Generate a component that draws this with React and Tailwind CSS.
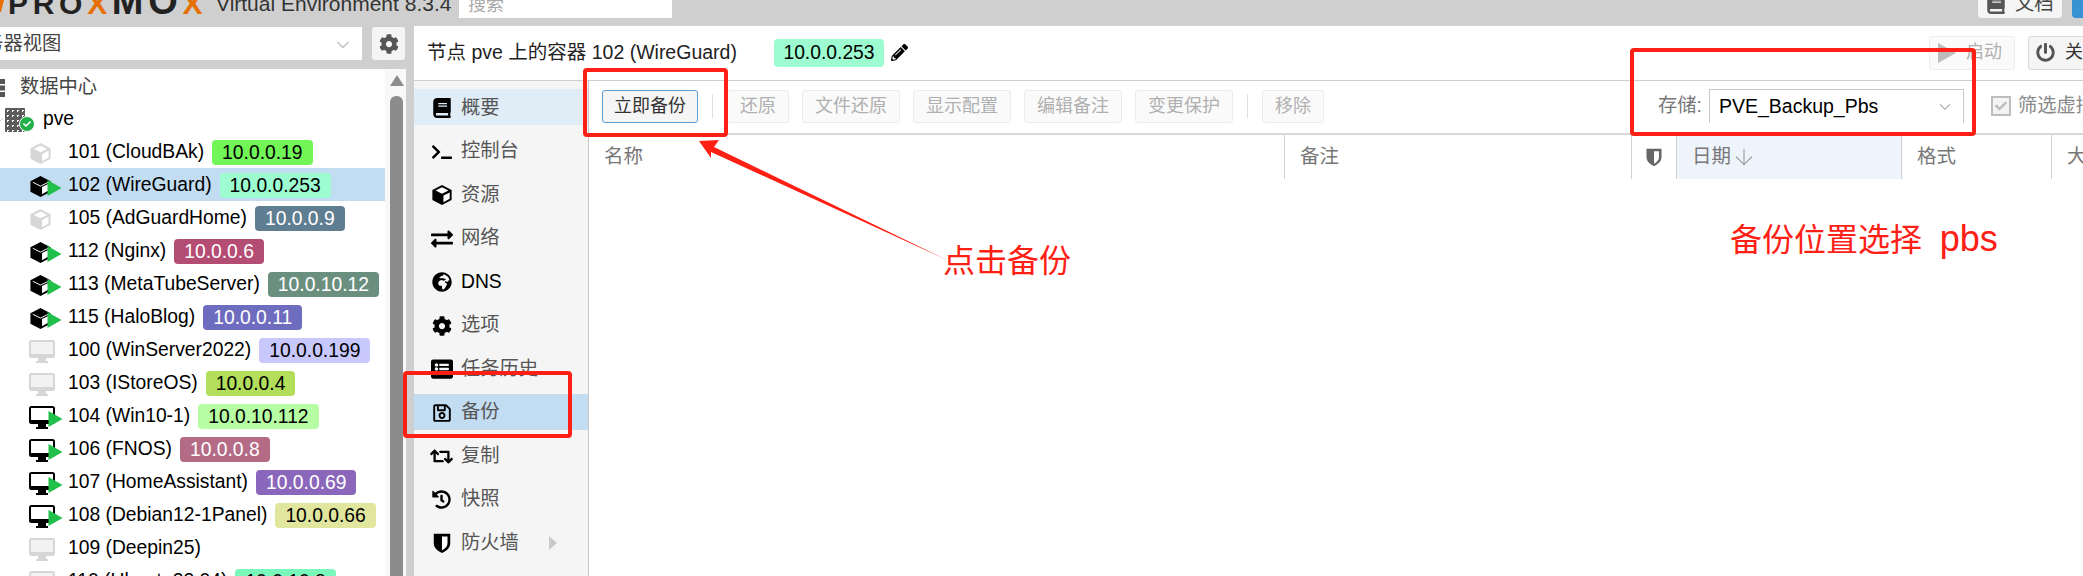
import React from 'react';
import { ChevronDown, ArrowDown } from 'lucide-react';
import {
    FaBook, FaTerminal, FaExchangeAlt, FaGlobeAfrica, FaCog, FaListAlt, FaRegSave,
    FaRetweet, FaHistory, FaPowerOff, FaPencilAlt, FaCheck,
} from 'react-icons/fa';

const guests = [
    { label: '101 (CloudBAk)', ip: '10.0.0.19', tag: 'bg-[#72f557] text-black', kind: 'ct', on: false },
    { label: '102 (WireGuard)', ip: '10.0.0.253', tag: 'bg-[#9dfdd0] text-black', kind: 'ct', on: true, selected: true },
    { label: '105 (AdGuardHome)', ip: '10.0.0.9', tag: 'bg-[#5f7e92] text-white', kind: 'ct', on: false },
    { label: '112 (Nginx)', ip: '10.0.0.6', tag: 'bg-[#b44d73] text-white', kind: 'ct', on: true },
    { label: '113 (MetaTubeServer)', ip: '10.0.10.12', tag: 'bg-[#6b8f7f] text-white', kind: 'ct', on: true },
    { label: '115 (HaloBlog)', ip: '10.0.0.11', tag: 'bg-[#6e6cbe] text-white', kind: 'ct', on: true },
    { label: '100 (WinServer2022)', ip: '10.0.0.199', tag: 'bg-[#c8c8fc] text-black', kind: 'vm', on: false },
    { label: '103 (IStoreOS)', ip: '10.0.0.4', tag: 'bg-[#b2de5b] text-black', kind: 'vm', on: false },
    { label: '104 (Win10-1)', ip: '10.0.10.112', tag: 'bg-[#b6fda3] text-black', kind: 'vm', on: true },
    { label: '106 (FNOS)', ip: '10.0.0.8', tag: 'bg-[#b46b85] text-white', kind: 'vm', on: true },
    { label: '107 (HomeAssistant)', ip: '10.0.0.69', tag: 'bg-[#8a67ba] text-white', kind: 'vm', on: true },
    { label: '108 (Debian12-1Panel)', ip: '10.0.0.66', tag: 'bg-[#e0e69e] text-black', kind: 'vm', on: true },
    { label: '109 (Deepin25)', kind: 'vm', on: false },
    { label: '110 (Ubuntu22.04)', ip: '10.0.10.8', tag: 'bg-[#7af7ba] text-black', kind: 'vm', on: false },
];

// lid = white top face; without it the top is only hinted by a thin line
const CubeIcon = ({ className, lid }) => (
    <svg viewBox="0 0 24 24" className={className}>
        <path d="M12 1 22.500 6.500V17.500L12 23 1.500 17.500V6.500Z" fill="currentColor" />
        {lid
            ? <path d="M12 3.600 19 7.200 12 10.600 5 7.200Z" fill="#fff" />
            : <path d="M4 7.600 12 11.600 20 7.600" fill="none" stroke="#fff" strokeWidth="1" />}
        <path d="M13.600 12.600 20.400 9.200V16.200L13.600 20Z" fill="#fff" />
    </svg>
);

const ShieldIcon = ({ className }) => (
    <svg viewBox="0 0 24 24" className={className}>
        <path d="M3 2H21V12C21 18 16 21 12 23 8 21 3 18 3 12Z" fill="currentColor" />
        <path d="M12 5H18V12C18 16 15 18.500 12 20Z" fill="#fff" />
    </svg>
);

const MonitorIcon = ({ on }) => (
    <svg viewBox="0 0 26 23" className={`w-[26px] h-[23px] ${on ? 'text-black' : 'text-[#d6d6d6]'}`}>
        <path d="M2.500 0H23.500A2.500 2.500 0 0 1 26 2.500V15.500A2.500 2.500 0 0 1 23.500 18H2.500A2.500 2.500 0 0 1 0 15.500V2.500A2.500 2.500 0 0 1 2.500 0Z" fill="currentColor" />
        <rect x="2" y="2" width="22" height="12" fill={on ? '#fff' : '#f2f2f2'} />
        <rect x="9" y="18" width="8" height="3" fill="currentColor" />
        <rect x="7" y="21" width="12" height="2" fill="currentColor" />
    </svg>
);

const GuestRow = ({ guest }) => (
    <div className={`flex items-center h-[33px] pl-[29px] pt-[2px] shrink-0 ${guest.selected ? 'bg-[#c2dcf2]' : ''}`}>
        <span className="relative w-[39px] h-[23px] mt-[2px] shrink-0">
            {guest.kind === 'ct'
                ? <CubeIcon className={`w-[23px] h-[23px] ${guest.on ? 'text-black' : 'text-[#d6d6d6]'}`} lid={!guest.on} />
                : <MonitorIcon on={guest.on} />}
            {guest.on && (
                <svg viewBox="0 0 14 16" className={`absolute top-[5px] w-[15px] h-[16px] ${guest.kind === 'ct' ? 'left-[18px]' : 'left-[19px]'}`}>
                    <path d="M0 0 14 8 0 16Z" fill="#21c04a" />
                </svg>
            )}
        </span>
        <span className="whitespace-nowrap">{guest.label}</span>
        {guest.ip && (
            <span className={`ml-[8px] h-[25px] leading-[25px] px-[10px] rounded-[4px] whitespace-nowrap ${guest.tag}`}>{guest.ip}</span>
        )}
    </div>
);

const navItems = [
    { label: '概要', icon: <FaBook size={20} />, active: true },
    { label: '控制台', icon: <FaTerminal size={20} /> },
    { label: '资源', icon: <CubeIcon className="w-[22px] h-[22px] text-black" lid /> },
    { label: '网络', icon: <FaExchangeAlt size={22} /> },
    { label: 'DNS', icon: <FaGlobeAfrica size={20} />, latin: true },
    { label: '选项', icon: <FaCog size={20} /> },
    { label: '任务历史', icon: <FaListAlt size={22} /> },
    { label: '备份', icon: <FaRegSave size={20} />, selected: true },
    { label: '复制', icon: <FaRetweet size={23} /> },
    { label: '快照', icon: <FaHistory size={19} /> },
    { label: '防火墙', icon: <ShieldIcon className="w-[22px] h-[22px] text-black" />, more: true },
];

const ToolButton = ({ label, primary }) => (
    <button
        className={primary
            ? 'h-[33px] w-[96px] shrink-0 rounded-[3px] border border-[#5b9bd5] bg-[#f5f5f5] text-[18px] text-[#333]'
            : 'h-[33px] px-[12px] shrink-0 rounded-[3px] border border-[#ececec] bg-[#fafafa] text-[18px] text-[#b0b0b0]'}
    >
        {label}
    </button>
);

const HeaderCell = ({ width, children, className = '' }) => (
    <div className={`h-[44px] flex items-center pl-[15px] border-r border-[#d0d0d0] shrink-0 ${width} ${className}`}>{children}</div>
);

export default function App() {
    return (
        <div
            className="relative w-[2083px] h-[576px] overflow-hidden bg-[#cfcfcf] flex flex-col text-[19.300px] text-black"
            style={{ fontFamily: '"Liberation Sans", "Noto Sans CJK SC", sans-serif' }}
        >
            {/* top bar, cut off by the screenshot */}
            <div className="h-[26px] shrink-0 flex items-start overflow-hidden">
                <svg viewBox="0 0 4 12" className="w-[4px] h-[12px] shrink-0">
                    <path d="M0 0H4L1 12H0Z" fill="#e57000" />
                </svg>
                <div className="ml-[4px] mt-[-16px] w-[208px] shrink-0 text-[30px] font-bold tracking-[4.700px] text-[#222] whitespace-nowrap leading-[35px]">
                    PRO<span className="text-[#e57000]">X</span><span className="text-[38px]">MO</span><span className="text-[#e57000]">X</span>
                </div>
                <div className="mt-[-9px] w-[243px] shrink-0 text-[21px] leading-[25px] text-[#333] whitespace-nowrap">Virtual Environment 8.3.4</div>
                <div className="w-[213px] h-[18px] bg-white shrink-0 overflow-hidden pl-[9px] text-[#aaa] text-[18px] leading-[10px]">搜索</div>
                <div className="ml-[1306px] w-[84px] h-[18px] bg-[#f5f5f5] rounded-b-[4px] shrink-0 flex items-start pl-[8px] overflow-hidden text-[#444]">
                    <FaBook size={20} className="mt-[-6px] text-[#555] shrink-0" />
                    <span className="ml-[9px] mt-[-8px] leading-[24px]">文档</span>
                </div>
                <div className="ml-[10px] flex-1 h-[18px] bg-[#3892d4] rounded-bl-[4px]" />
            </div>

            <div className="flex flex-1 min-h-0">
                {/* left column: view selector and resource tree */}
                <div className="w-[414px] shrink-0 flex flex-col">
                    <div className="flex h-[33px] mt-[1px] shrink-0">
                        <div className="w-[362px] bg-white flex items-center overflow-hidden relative text-[#444] pt-[2px]">
                            <span className="ml-[-35px] whitespace-nowrap">服务器视图</span>
                            <ChevronDown size={20} className="ml-auto mr-[9px] text-[#c4c4c4]" />
                        </div>
                        <div className="ml-[10px] w-[33px] bg-[#f5f5f5] rounded-[3px] flex items-center justify-center">
                            <FaCog size={20} className="text-[#555]" />
                        </div>
                    </div>
                    <div className="mt-[9px] w-[406px] flex-1 min-h-0 bg-white flex overflow-hidden">
                        <div className="w-[385px] shrink-0 flex flex-col">
                            <div className="flex items-center h-[33px] pt-[4px] shrink-0">
                                <svg viewBox="0 0 5 18" className="w-[5px] h-[18px] mt-[1px] shrink-0">
                                    <rect y="0" width="5" height="5" fill="#555" />
                                    <rect y="6.500" width="5" height="5" fill="#555" />
                                    <rect y="13" width="5" height="5" fill="#555" />
                                </svg>
                                <span className="ml-[15px] text-[#444]">数据中心</span>
                            </div>
                            <div className="flex items-center h-[33px] pt-[2px] shrink-0">
                                <ChevronDown size={10} className="ml-[-5px] text-[#bbb] shrink-0" />
                                <span className="relative ml-[0px] w-[38px] h-[24px] shrink-0">
                                    <span className="block w-[20px] h-[24px] bg-[#5c5c5c] rounded-[1px]" style={{ backgroundImage: 'radial-gradient(#fff 1px, transparent 1px)', backgroundSize: '5px 5px' }} />
                                    <span className="absolute left-[14px] top-[8px] w-[16px] h-[16px] rounded-full bg-[#21b04a] border border-white flex items-center justify-center">
                                        <FaCheck size={8} className="text-white" />
                                    </span>
                                </span>
                                <span>pve</span>
                            </div>
                            {guests.map((guest) => (
                                <GuestRow key={guest.label} guest={guest} />
                            ))}
                        </div>
                        <div className="flex-1 bg-[#f8f8f8] flex flex-col items-start pl-[5px]">
                            <svg viewBox="0 0 14 11" className="w-[14px] h-[11px] mt-[6px] shrink-0">
                                <path d="M7 0 14 11H0Z" fill="#8c8c8c" />
                            </svg>
                            <div className="mt-[10px] w-[13px] flex-1 bg-[#8c8c8c] rounded-t-[6px]" />
                        </div>
                    </div>
                </div>

                {/* right panel */}
                <div className="flex-1 min-w-0 bg-white flex flex-col">
                    <div className="h-[55px] shrink-0 border-b border-[#cfcfcf] flex items-center pl-[13px] pb-[1px] overflow-hidden">
                        <span className="w-[347px] shrink-0 whitespace-nowrap text-[#222] text-[19.500px]">节点 pve 上的容器 102 (WireGuard)</span>
                        <span className="h-[28px] leading-[28px] w-[110px] text-center rounded-[4px] bg-[#9dfdd0] shrink-0">10.0.0.253</span>
                        <FaPencilAlt size={17} className="ml-[7px] shrink-0" />
                        <div className="ml-[1021px] w-[86px] h-[34px] shrink-0 rounded-[3px] border border-[#ececec] bg-[#fafafa] flex items-center pl-[8px] text-[18px] text-[#b0b0b0]">
                            <svg viewBox="0 0 18 20" className="w-[18px] h-[20px] shrink-0">
                                <path d="M0 0 18 10 0 20Z" fill="#bdbdbd" />
                            </svg>
                            <span className="ml-[10px] whitespace-nowrap">启动</span>
                        </div>
                        <div className="ml-[13px] w-[80px] h-[34px] shrink-0 rounded-[3px] border border-[#d8d8d8] bg-[#f5f5f5] flex items-center pl-[7px] text-[18px] text-[#333]">
                            <FaPowerOff size={19} className="text-[#555] shrink-0" />
                            <span className="ml-[10px] whitespace-nowrap">关机</span>
                        </div>
                    </div>
                    <div className="flex flex-1 min-h-0">
                        <div className="w-[175px] shrink-0 bg-[#f5f5f5] border-r border-[#c8c8c8] pt-[8px] flex flex-col gap-[7.500px]">
                            {navItems.map((item) => (
                                <div
                                    key={item.label}
                                    className={`h-[36px] pt-[2px] shrink-0 flex items-center ${item.selected ? 'bg-[#c2dcf2]' : item.active ? 'bg-[#e0ecf6]' : ''}`}
                                >
                                    <span className="w-[47px] flex justify-center pl-[8px] shrink-0">{item.icon}</span>
                                    <span className={item.latin ? 'text-black' : 'text-[#555]'}>{item.label}</span>
                                    {item.more && (
                                        <svg viewBox="0 0 8 14" className="w-[8px] h-[14px] ml-[30px]">
                                            <path d="M0 0 8 7 0 14Z" fill="#c9c9c9" />
                                        </svg>
                                    )}
                                </div>
                            ))}
                        </div>
                        <div className="flex-1 min-w-0 flex flex-col overflow-hidden">
                            <div className="h-[54px] shrink-0 border-b-2 border-[#d8d8d8] flex items-center pl-[13px] pb-[2px] gap-[13px]">
                                <ToolButton label="立即备份" primary />
                                <span className="w-px h-[24px] mx-[1px] bg-[#dedede] shrink-0" />
                                <ToolButton label="还原" />
                                <ToolButton label="文件还原" />
                                <ToolButton label="显示配置" />
                                <ToolButton label="编辑备注" />
                                <ToolButton label="变更保护" />
                                <span className="w-px h-[24px] mx-[1px] bg-[#dedede] shrink-0" />
                                <ToolButton label="移除" />
                                <span className="ml-[321px] shrink-0 text-[#777] whitespace-nowrap mr-[-6px]">存储:</span>
                                <div className="w-[255px] h-[34px] shrink-0 border border-b-0 border-[#c8c8c8] flex items-center pl-[9px] text-[19.500px]">
                                    <span>PVE_Backup_Pbs</span>
                                    <ChevronDown size={18} className="ml-auto mr-[9px] text-[#b8b8b8]" />
                                </div>
                                <span className="ml-[14px] w-[20px] h-[20px] shrink-0 border-2 border-[#bdbdbd] bg-[#f4f4f4] flex items-center justify-center">
                                    <FaCheck size={12} className="text-[#bdbdbd]" />
                                </span>
                                <span className="ml-[-6px] shrink-0 whitespace-nowrap text-[#888]">筛选虚拟机</span>
                            </div>
                            <div className="flex text-[#777] overflow-hidden text-[19.500px]">
                                <HeaderCell width="w-[696px]">名称</HeaderCell>
                                <HeaderCell width="w-[347px]">备注</HeaderCell>
                                <HeaderCell width="w-[45px]"><ShieldIcon className="w-[20px] h-[20px] ml-[-3px] text-[#666]" /></HeaderCell>
                                <HeaderCell width="w-[225px]" className="bg-[#eef4fb]">
                                    日期<ArrowDown size={26} strokeWidth={1} className="ml-[0px] text-[#999]" />
                                </HeaderCell>
                                <HeaderCell width="w-[150px]">格式</HeaderCell>
                                <HeaderCell width="w-[60px]">大小</HeaderCell>
                            </div>
                        </div>
                    </div>
                </div>
            </div>

            {/* red annotations drawn over the screenshot */}
            <div className="absolute left-[583px] top-[68px] w-[145px] h-[69px] border-4 border-[#ff2015] rounded-[4px]" />
            <div className="absolute left-[403px] top-[371px] w-[169px] h-[67px] border-4 border-[#ff2015] rounded-[4px]" />
            <div className="absolute left-[1630px] top-[48px] w-[346px] h-[88px] border-4 border-[#ff2015] rounded-[4px]" />
            <svg className="absolute left-[690px] top-[135px] w-[265px] h-[130px]" viewBox="690 135 265 130">
                <path d="M699 141 719 140 714 147 947 260 711 152 711 158Z" fill="#ff2015" />
            </svg>
            <span className="absolute left-[943px] top-[241px] text-[32px] leading-[40px] text-[#ff2015] whitespace-nowrap">点击备份</span>
            <span className="absolute left-[1730px] top-[219px] text-[32px] leading-[40px] text-[#ff2015] whitespace-pre">备份位置选择  <span className="text-[36px]">pbs</span></span>
        </div>
    );
}
